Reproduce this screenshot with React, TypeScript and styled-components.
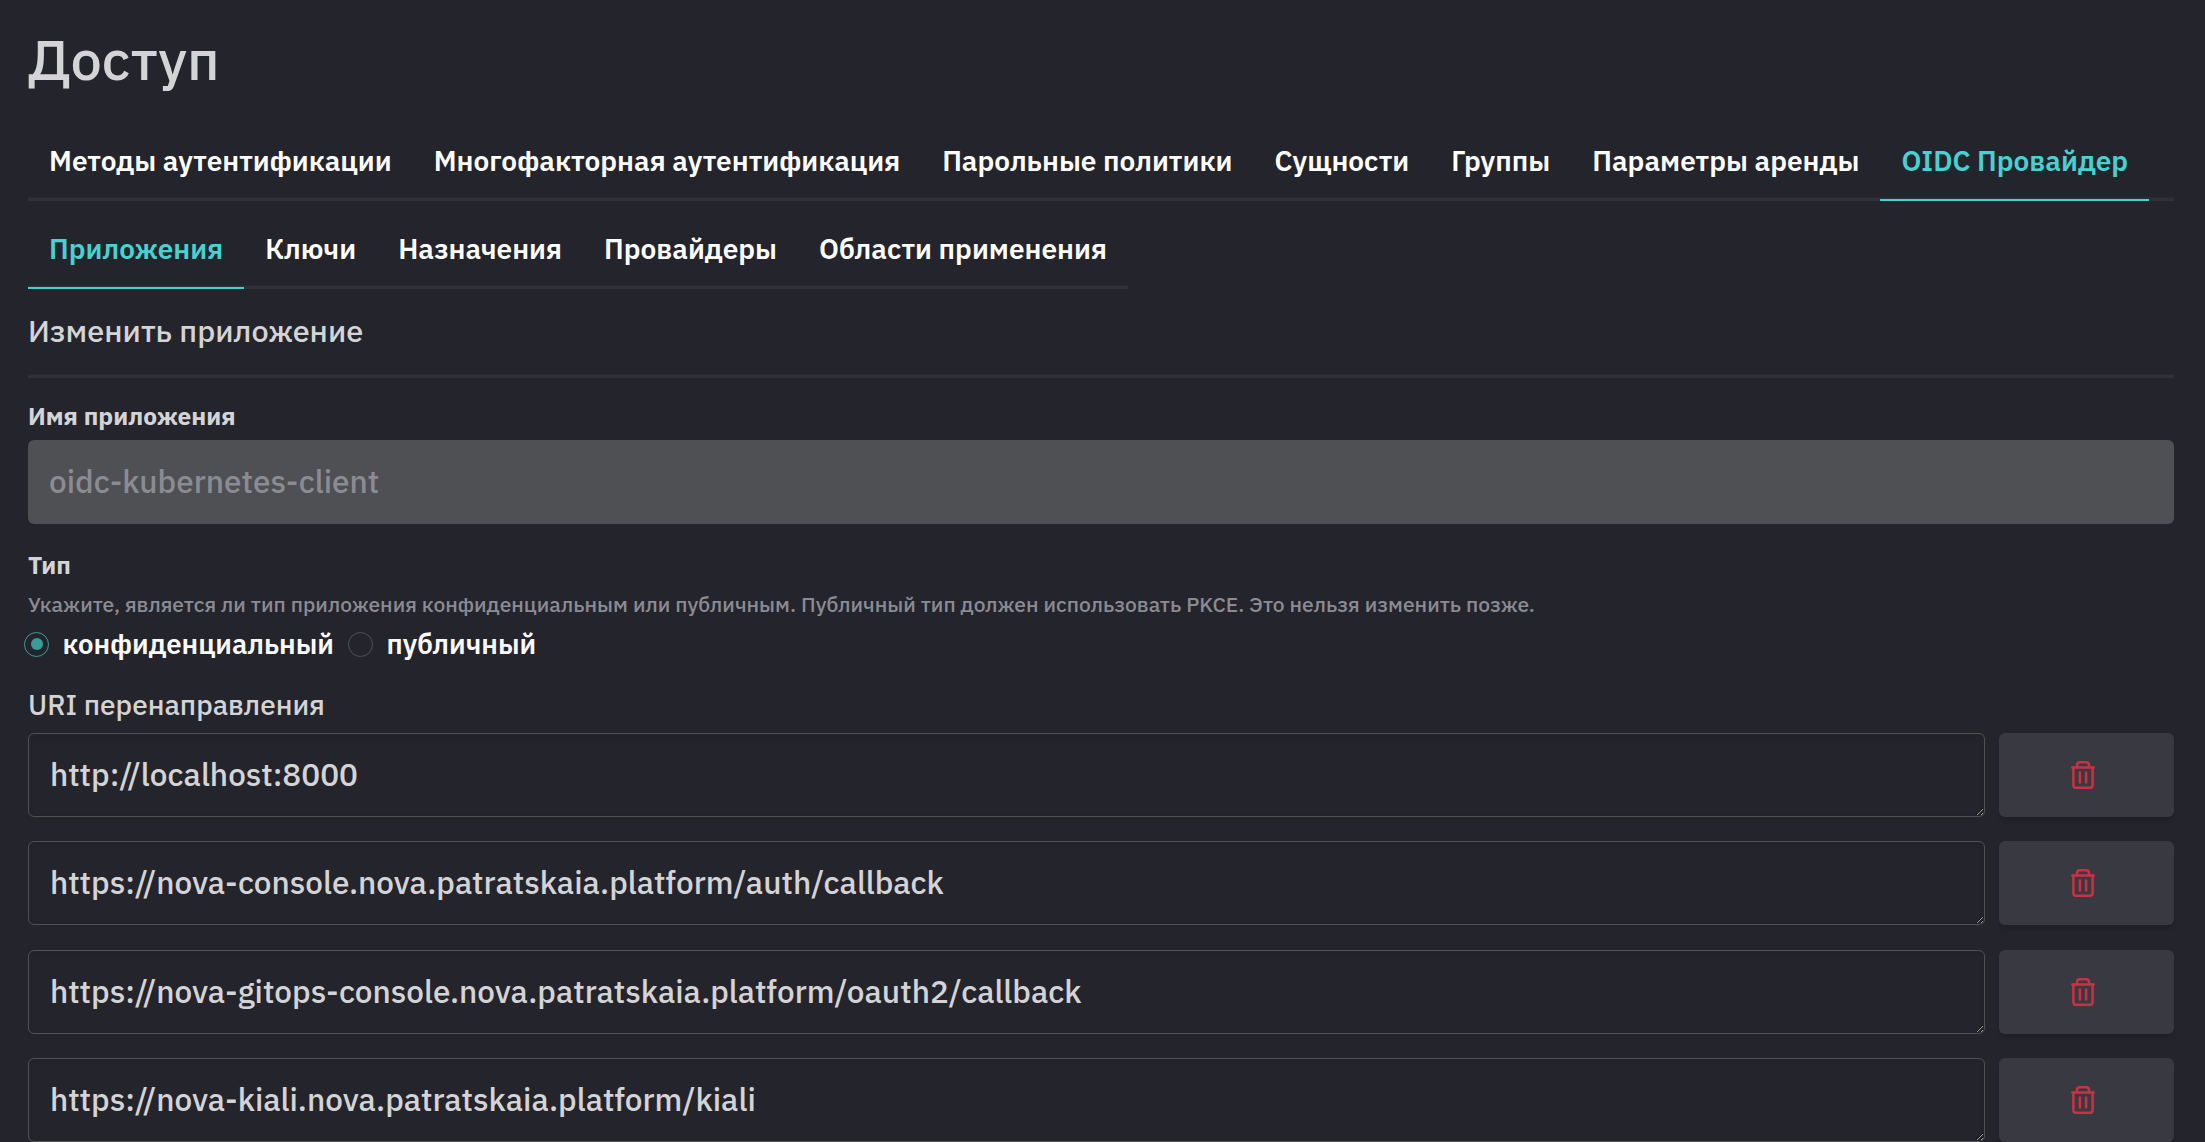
import React, { useState } from 'react';
import styled, { createGlobalStyle } from 'styled-components';

const color = {
  page: '#24242c',
  line: '#30303a',
  lineSoft: '#292931',
  text: '#d4d4d6',
  strong: '#ffffff',
  muted: '#8b8b93',
  accent: '#48d1d1',
  radio: '#389d98',
  border: '#515153',
  disabled: '#4f5054',
  button: '#393941',
  danger: '#cb3144',
};

const GlobalStyle = createGlobalStyle`
  *, *::before, *::after { box-sizing: border-box; }
  body {
    margin: 0;
    background: ${color.page};
    color: ${color.text};
    font-family: "IBM Plex Sans", Inter, Roboto, sans-serif;
    font-weight: 500;
    overflow: hidden;
  }
`;

const Page = styled.main`
  display: flex;
  flex-direction: column;
  height: 1142px;
  padding: 28px 31px 0 28px;
  overflow: hidden;
`;

const Title = styled.h1`
  margin: 0 0 27px;
  font-size: 56px;
  font-weight: 500;
  line-height: 62px;
  padding-bottom: 4px;
`;

const TabBar = styled.nav<{ $fit?: boolean }>`
  display: flex;
  flex: none;
  align-self: ${p => (p.$fit ? 'flex-start' : 'stretch')};
  height: 80px;
  margin-bottom: 8px;
  border-bottom: 3px solid ${color.line};
  box-shadow: inset 0 -1px ${color.lineSoft};
`;

const Tab = styled.a<{ $active?: boolean }>`
  flex: none;
  height: 80px;
  padding: 0 21px;
  font-size: 28px;
  font-weight: 600;
  line-height: 80px;
  white-space: nowrap;
  color: ${p => (p.$active ? color.accent : color.strong)};
  box-shadow: ${p => (p.$active ? `inset 0 -2px ${color.accent}` : 'none')};
`;

const SectionTitle = styled.h2`
  margin: 12px 0 0;
  font-size: 30.625px;
  font-weight: 500;
  line-height: 44px;
`;

const Divider = styled.hr`
  flex: none;
  width: 100%;
  height: 4px;
  margin: 21px 0 23px;
  border: 0;
  border-top: 1px solid ${color.lineSoft};
  background: ${color.line};
`;

const Label = styled.label`
  font-size: 24.5px;
  font-weight: 700;
  line-height: 30px;
`;

const NameInput = styled.input`
  flex: none;
  width: 100%;
  height: 84px;
  margin: 9px 0 26px;
  padding: 0 21px 2px;
  border: 0;
  border-radius: 6px;
  background: ${color.disabled};
  color: ${color.muted};
  font: inherit;
  font-size: 31.5px;
`;

const Hint = styled.p`
  margin: 9px 0 12px;
  font-size: 21px;
  line-height: 30px;
  color: ${color.muted};
`;

const RadioGroup = styled.div`
  display: flex;
  gap: 14px;
  height: 26px;
  margin-left: -4px;
`;

const RadioOption = styled.label`
  display: flex;
  align-items: center;
  gap: 13.5px;
  font-size: 27.56px;
  font-weight: 600;
  line-height: 26px;
  color: #fafafa;
`;

const RadioMark = styled.span<{ $checked: boolean }>`
  display: grid;
  place-items: center;
  width: 25px;
  height: 25px;
  border: 1px solid ${p => (p.$checked ? color.radio : color.border)};
  border-radius: 50%;

  &::after {
    content: "";
    width: 12px;
    height: 12px;
    border-radius: 50%;
    background: ${p => (p.$checked ? color.radio : 'transparent')};
  }
`;

const UriTitle = styled.div`
  margin: 33px 0 12.75px;
  font-size: 28px;
  line-height: 30px;
`;

const UriList = styled.div`
  display: flex;
  flex-direction: column;
  gap: 24.5px;
`;

const UriRow = styled.div`
  display: flex;
  gap: 14px;
  height: 84px;
`;

const UriField = styled.textarea`
  flex: 1;
  height: 84px;
  margin: 0;
  padding: 0 21px;
  border: 1px solid ${color.border};
  border-radius: 6px;
  outline: 0;
  background: transparent;
  box-shadow: inset 0 2px 4px rgba(0, 0, 0, 0.08);
  color: ${color.text};
  font: inherit;
  font-size: 31.5px;
  line-height: 81.5px;
  white-space: pre;
  overflow: hidden;
  resize: vertical;
`;

const DeleteButton = styled.button`
  display: grid;
  place-items: center;
  width: 175px;
  height: 84px;
  padding: 0 7px 0 0;
  border: 0;
  border-radius: 6px;
  background: ${color.button};
  box-shadow: 0 4px 4px -1px rgba(0, 0, 0, 0.16);
  color: ${color.danger};
`;

const TrashIcon = () => (
  <svg width="24" height="28" viewBox="0 0 24 28" fill="none" stroke="currentColor" strokeWidth="2.5" strokeLinecap="round" strokeLinejoin="round">
    <path d="M1.3 6.4H22.7" />
    <path d="M6 6.2V4.1Q6 1.3 8.8 1.3H15.2Q18 1.3 18 4.1V6.2" />
    <path d="M2.4 6.6V24.3Q2.4 26.7 4.8 26.7H19.2Q21.6 26.7 21.6 24.3V6.6" />
    <path d="M8.9 11.6V21.5M15.1 11.6V21.5" />
  </svg>
);

const mainTabs = [
  'Методы аутентификации',
  'Многофакторная аутентификация',
  'Парольные политики',
  'Сущности',
  'Группы',
  'Параметры аренды',
  'OIDC Провайдер',
];

const providerTabs = ['Приложения', 'Ключи', 'Назначения', 'Провайдеры', 'Области применения'];

const clientTypes = ['конфиденциальный', 'публичный'];

const redirectUris = [
  'http://localhost:8000',
  'https://nova-console.nova.patratskaia.platform/auth/callback',
  'https://nova-gitops-console.nova.patratskaia.platform/oauth2/callback',
  'https://nova-kiali.nova.patratskaia.platform/kiali',
];

export default function App() {
  const [type, setType] = useState(clientTypes[0]);

  return (
    <>
      <GlobalStyle />
      <Page>
        <Title>Доступ</Title>
        <TabBar>
          {mainTabs.map(name => (
            <Tab key={name} $active={name === 'OIDC Провайдер'}>
              {name}
            </Tab>
          ))}
        </TabBar>
        <TabBar $fit>
          {providerTabs.map(name => (
            <Tab key={name} $active={name === 'Приложения'}>
              {name}
            </Tab>
          ))}
        </TabBar>
        <SectionTitle>Изменить приложение</SectionTitle>
        <Divider />
        <Label>Имя приложения</Label>
        <NameInput disabled value="oidc-kubernetes-client" />
        <Label>Тип</Label>
        <Hint>
          Укажите, является ли тип приложения конфиденциальным или публичным. Публичный тип должен использовать PKCE. Это
          нельзя изменить позже.
        </Hint>
        <RadioGroup role="radiogroup">
          {clientTypes.map(name => (
            <RadioOption key={name} onClick={() => setType(name)}>
              <RadioMark $checked={name === type} />
              {name}
            </RadioOption>
          ))}
        </RadioGroup>
        <UriTitle>URI перенаправления</UriTitle>
        <UriList>
          {redirectUris.map(uri => (
            <UriRow key={uri}>
              <UriField rows={1} spellCheck={false} defaultValue={uri} />
              <DeleteButton aria-label="Удалить">
                <TrashIcon />
              </DeleteButton>
            </UriRow>
          ))}
        </UriList>
      </Page>
    </>
  );
}
